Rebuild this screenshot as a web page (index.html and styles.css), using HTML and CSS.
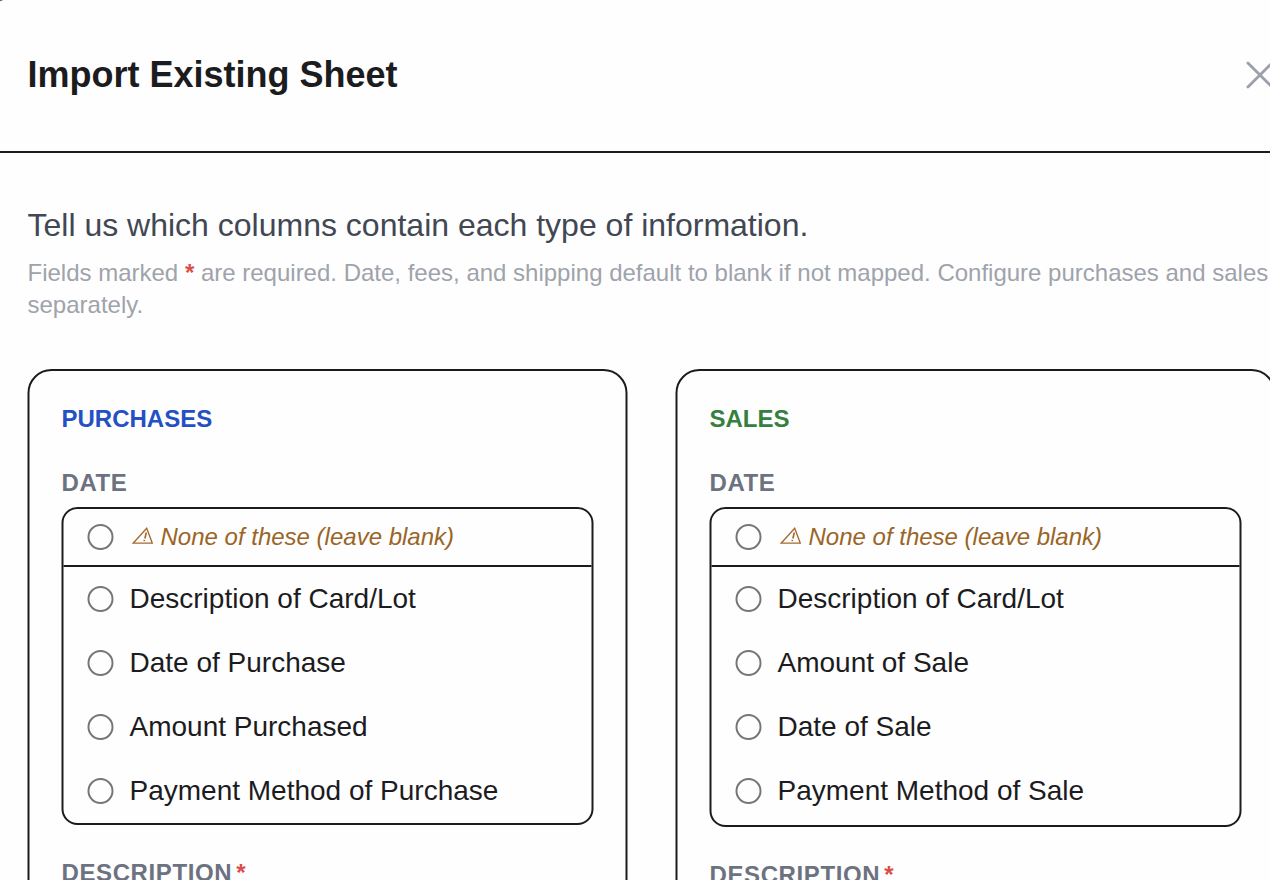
FILE: index.html
```html
<!DOCTYPE html>
<html lang="en">
<head>
    <meta charset="UTF-8">
    <meta name="viewport" content="width=device-width, initial-scale=1.0">
    <title>Import Existing Sheet</title>
    <link rel="stylesheet" href="styles.css">
</head>
<body>
    <div class="modal">
        <header>
            <h1>Import Existing Sheet</h1>
            <button class="close" aria-label="Close">
                <svg width="28" height="28" viewBox="0 0 28 28">
                    <path d="M2.4 2 L26.4 26 M26.4 2 L2.4 26" />
                </svg>
            </button>
        </header>
        <main>
            <p class="lead">Tell us which columns contain each type of information.</p>
            <p class="hint">Fields marked <span class="req">*</span> are required. Date, fees, and shipping default to blank if not mapped. Configure purchases and sales separately.</p>

            <div class="cards">
                <section class="card">
                    <h2 class="purchases">Purchases</h2>
                    <h3>Date</h3>
                    <div class="options">
                        <label class="none"><input type="radio" name="pdate"><span><svg class="warn" width="22" height="18" viewBox="0 0 22 18"><path d="M1.6 16.2 L15.2 1.2 L20.8 16.2 Z" /><path class="mark" d="M14.8 5.5 L13.4 11.5 M12.9 12.8 L12.6 14.2" /></svg>None of these (leave blank)</span></label>
                        <label><input type="radio" name="pdate"><span>Description of Card/Lot</span></label>
                        <label><input type="radio" name="pdate"><span>Date of Purchase</span></label>
                        <label><input type="radio" name="pdate"><span>Amount Purchased</span></label>
                        <label><input type="radio" name="pdate"><span>Payment Method of Purchase</span></label>
                    </div>
                    <h3>Description<span class="req">*</span></h3>
                </section>
                <section class="card sales-card">
                    <h2 class="sales">Sales</h2>
                    <h3>Date</h3>
                    <div class="options">
                        <label class="none"><input type="radio" name="sdate"><span><svg class="warn" width="22" height="18" viewBox="0 0 22 18"><path d="M1.6 16.2 L15.2 1.2 L20.8 16.2 Z" /><path class="mark" d="M14.8 5.5 L13.4 11.5 M12.9 12.8 L12.6 14.2" /></svg>None of these (leave blank)</span></label>
                        <label><input type="radio" name="sdate"><span>Description of Card/Lot</span></label>
                        <label><input type="radio" name="sdate"><span>Amount of Sale</span></label>
                        <label><input type="radio" name="sdate"><span>Date of Sale</span></label>
                        <label><input type="radio" name="sdate"><span>Payment Method of Sale</span></label>
                    </div>
                    <h3>Description<span class="req">*</span></h3>
                </section>
            </div>
        </main>
    </div>
</body>
</html>
```
FILE: styles.css
```css
* {
    box-sizing: border-box;
}
body {
    font-family: "Liberation Sans", Arial, sans-serif;
    margin: 0;
    height: 880px;
    overflow: hidden;
    background-color: #555;
    color: #1c1c1e;
}
h1, h2, h3, p {
    margin: 0;
}
.modal {
    width: 1344px;
    height: 1100px;
    margin: -1px 0 0 -20px;
    background-color: #fefefe;
    border-radius: 32px;
    transform: translateX(-0.5px);
}
header {
    display: flex;
    align-items: center;
    justify-content: space-between;
    height: 154px;
    padding: 0 50px 0 48px;
    border-bottom: 2px solid #1c1c1e;
}
h1 {
    font-size: 36px;
    line-height: 40px;
}
.close {
    display: flex;
    padding: 0;
    border: 0;
    background: none;
}
.close path {
    fill: none;
    stroke: #9ca0ab;
    stroke-width: 2.8;
    stroke-linecap: round;
}
main {
    padding: 48px;
}
.lead {
    font-size: 32px;
    line-height: 48px;
    color: #414753;
}
.hint {
    margin-top: 8px;
    font-size: 24px;
    line-height: 32px;
    color: #9fa3ab;
}
.req {
    color: #dc4c48;
    font-weight: bold;
}
.cards {
    display: grid;
    grid-template-columns: 600px 600px;
    gap: 48px;
    margin-top: 48px;
}
.card {
    height: 700px;
    padding: 32px;
    border: 2px solid #1c1c1e;
    border-radius: 24px;
}
h2 {
    font-size: 24px;
    line-height: 32px;
    text-transform: uppercase;
    margin-bottom: 32px;
}
.purchases {
    color: #2450c4;
}
.sales {
    color: #35803f;
}
h3 {
    font-size: 24px;
    line-height: 32px;
    letter-spacing: 0.6px;
    text-transform: uppercase;
    color: #6c727f;
}
h3 .req {
    margin-left: 4px;
}
.options {
    margin: 8px 0 32px;
    border: 2px solid #1c1c1e;
    border-radius: 16px;
}
.sales-card .options {
    padding-bottom: 2px;
}
.options label {
    display: flex;
    align-items: center;
    gap: 16px;
    height: 64px;
    padding: 0 24px;
    font-size: 28px;
}
.options .none {
    height: 58px;
    border-bottom: 2px solid #1c1c1e;
    font-size: 24px;
    font-style: italic;
    color: #9a6526;
}
input[type="radio"] {
    appearance: none;
    width: 26px;
    height: 26px;
    margin: 0;
    border: 2px solid #767676;
    border-radius: 50%;
}
.warn {
    margin: 0 7px 0 2px;
}
.warn path {
    fill: none;
    stroke: #a5682a;
    stroke-width: 1.3;
}
.warn .mark {
    stroke-width: 1.6;
}
```
